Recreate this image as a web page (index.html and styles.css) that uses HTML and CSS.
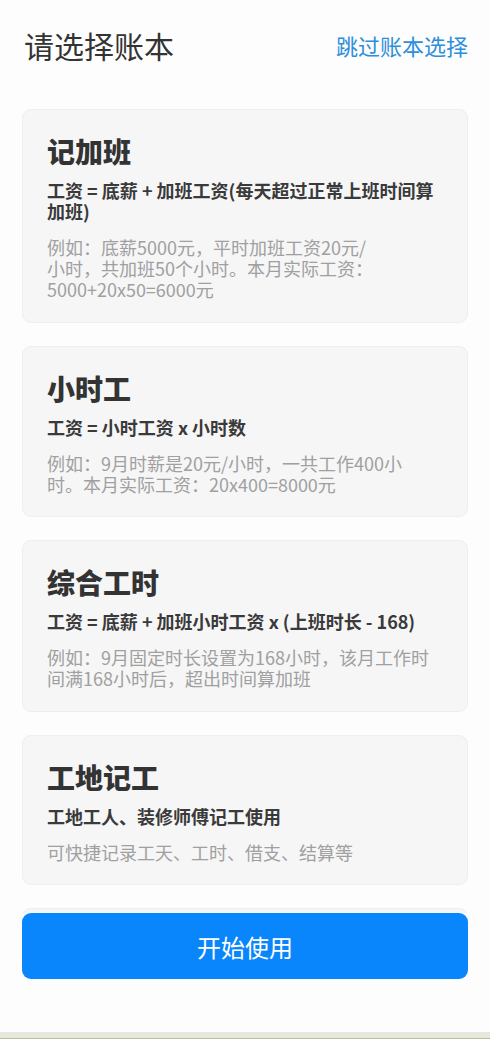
FILE: index.html
```html
<!DOCTYPE html>
<html>
<head>
  <meta charset="utf-8">
  <title>请选择账本</title>
<link rel="stylesheet" href="styles.css">
</head>
<body>
  <div class="page">
    <header class="top">
      <h1 class="top-title">请选择账本</h1>
      <a class="skip" href="#">跳过账本选择</a>
    </header>

    <main class="list">
      <div class="card">
        <h2 class="card-title">记加班</h2>
        <p class="card-formula">工资 = 底薪 + 加班工资(每天超过正常上班时间算加班)</p>
        <p class="card-desc">例如：底薪5000元，平时加班工资20元/<br>小时，共加班50个小时。本月实际工资：<br>5000+20x50=6000元</p>
      </div>
      <div class="card">
        <h2 class="card-title">小时工</h2>
        <p class="card-formula">工资 = 小时工资 x 小时数</p>
        <p class="card-desc">例如：9月时薪是20元/小时，一共工作400小<br>时。本月实际工资：20x400=8000元</p>
      </div>
      <div class="card">
        <h2 class="card-title">综合工时</h2>
        <p class="card-formula">工资 = 底薪 + 加班小时工资 x (上班时长 - 168)</p>
        <p class="card-desc">例如：9月固定时长设置为168小时，该月工作时<br>间满168小时后，超出时间算加班</p>
      </div>
      <div class="card">
        <h2 class="card-title">工地记工</h2>
        <p class="card-formula">工地工人、装修师傅记工使用</p>
        <p class="card-desc">可快捷记录工天、工时、借支、结算等</p>
      </div>
      <div class="card card-more"></div>
    </main>

    <footer class="bottom">
      <button type="button" class="start">开始使用</button>
    </footer>
    <div class="bar"></div>
  </div>
</body>
</html>
```

FILE: styles.css
```css
body {
  margin: 0;
  padding: 0;
  background-color: #fdfdfd;
  font-family: "Noto Sans CJK SC", sans-serif;
}

.page {
  height: 1039px;
  display: flex;
  flex-direction: column;
  overflow: hidden;
}

.top {
  height: 90px;
  flex-shrink: 0;
  display: flex;
  justify-content: space-between;
  align-items: center;
  padding: 0 22px 0 24px;
}

.top-title {
  margin: 0;
  font-size: 30px;
  font-weight: normal;
  line-height: 36px;
  color: #333;
}

.skip {
  font-size: 22px;
  line-height: 30px;
  color: #2d8fdb;
  text-decoration: none;
}

.list {
  flex: 1;
  min-height: 0;
  overflow: hidden;
  display: flex;
  flex-direction: column;
  gap: 23px;
  padding: 19px 22px 0;
}

.card {
  flex-shrink: 0;
  background-color: #f6f6f7;
  border: 1px solid #eeeeef;
  border-radius: 9px;
  padding: 23px 24px 21.5px;
}

.card-more {
  height: 120px;
}

.card-title {
  margin: 0;
  font-size: 28px;
  font-weight: 900;
  line-height: 36px;
  color: #333;
}

.card-formula {
  margin: 11px 0 0;
  font-size: 18px;
  font-weight: bold;
  line-height: 21px;
  color: #3a3a3a;
}

.card-desc {
  margin: 15px 0 0;
  font-size: 18px;
  line-height: 21px;
  color: #a0a0a0;
}

.bottom {
  flex-shrink: 0;
  padding: 0 22px 53px;
}

.start {
  width: 100%;
  height: 66px;
  border: none;
  border-radius: 9px;
  background-color: #0a86fd;
  color: #fff;
  font-family: "Noto Sans CJK SC", sans-serif;
  font-size: 24px;
  cursor: pointer;
}

.bar {
  height: 4px;
  flex-shrink: 0;
  border-top: 2px solid #e6e6e6;
  border-bottom: 1px solid #b9bda9;
  background-color: #e5ebd2;
}
```
